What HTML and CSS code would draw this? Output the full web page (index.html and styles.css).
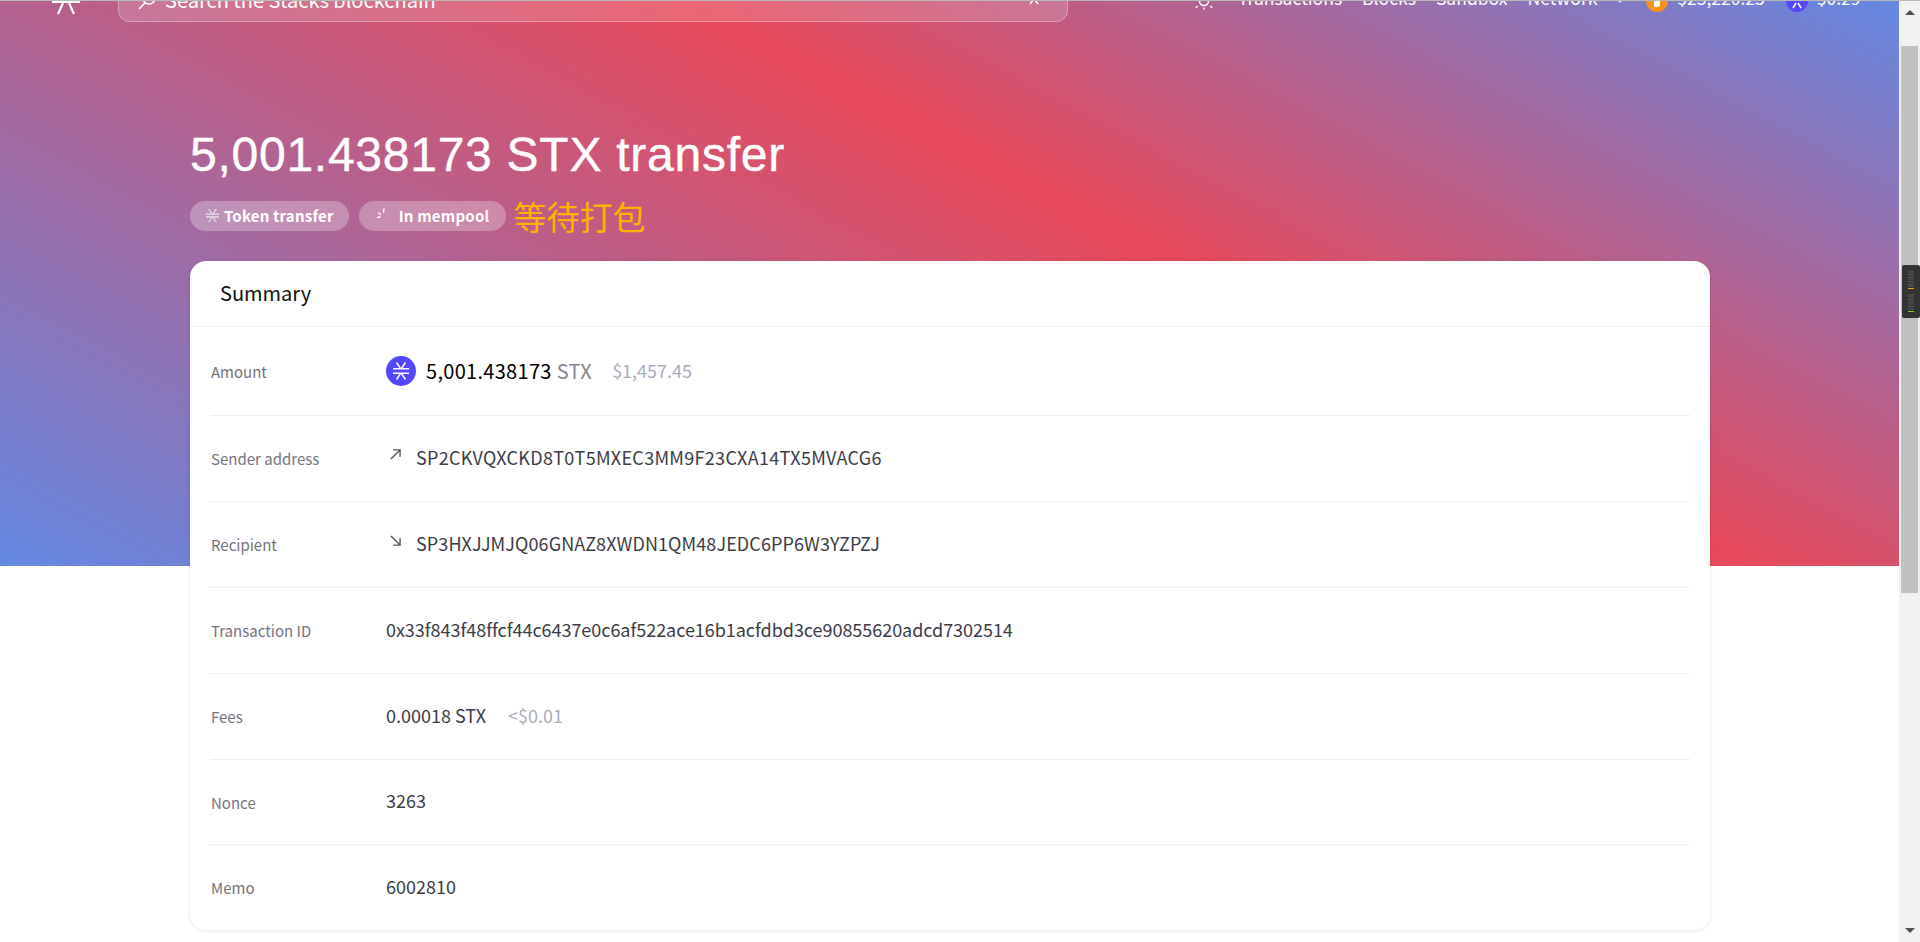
FILE: index.html
```html
<!DOCTYPE html>
<html lang="en">
<head>
  <meta charset="UTF-8" />
  <title>5,001.438173 STX transfer</title>
  <link rel="stylesheet" href="styles.css">
</head>
<body>
  <div class="window">
    <div class="page">

      <!-- Top nav, scrolled partly out of view -->
      <nav class="nav">
        <svg class="logo" viewBox="0 0 28 28" fill="none" stroke="#fff" stroke-width="2.2">
          <path d="M0 8H28M0 14H28M11 15L6 26M17 15L22 26"/>
        </svg>
        <div class="search">
          <svg class="search-icon" viewBox="0 0 18 18" fill="none" stroke="#fff" stroke-width="1.6">
            <circle cx="11" cy="5" r="6"/>
            <path d="M7 10L1 16"/>
          </svg>
          <span class="search-text">Search the Stacks blockchain</span>
          <svg class="search-close" viewBox="0 0 12 12" fill="none" stroke="#fff" stroke-width="1.4">
            <path d="M1 11L5 6L9 11"/>
          </svg>
        </div>
        <svg class="sun" viewBox="0 0 24 24" fill="none" stroke="#fff" stroke-width="1.5">
          <circle cx="12" cy="14" r="4.500"/>
          <path d="M12 20.500V22.500M5.500 19L4 21M18.500 19L20 21"/>
        </svg>
        <a class="nav-link nav-first">Transactions</a>
        <a class="nav-link">Blocks</a>
        <a class="nav-link">Sandbox</a>
        <a class="nav-link">Network</a>
        <span class="nav-caret"></span>
        <div class="price price-btc">
          <span class="coin coin-btc"><span class="coin-mark"></span></span>
          <span class="price-text">$23,220.25</span>
        </div>
        <div class="price">
          <span class="coin coin-stx">
            <svg class="coin-svg" viewBox="0 0 22 22" fill="none" stroke="#fff" stroke-width="1.5">
              <path d="M7 11L11 4L15 11M7 18L10 13M15 18L12 13"/>
            </svg>
          </span>
          <span class="price-text">$0.29</span>
        </div>
      </nav>

      <main class="content">
        <h1 class="title">5,001.438173 STX transfer</h1>

        <div class="tags">
          <span class="tag">
            <svg class="tag-icon" viewBox="0 0 16 16" fill="none" stroke="#fff" stroke-width="1">
              <path d="M1 6.500H15M1 9.500H15M4 1L7.500 6M12 1L8.500 6M4 15L7.500 10M12 15L8.500 10"/>
            </svg>
            Token transfer
          </span>
          <span class="tag tag-pending">
            <svg class="tag-spin" viewBox="0 0 16 16" fill="none" stroke="#fff" stroke-width="1.4" stroke-linecap="round">
              <path d="M9 2L8.500 5M3.500 6L5.500 7.500M2.500 10.500L5 10"/>
            </svg>
            In mempool
          </span>
          <span class="tag-note">等待打包</span>
        </div>

        <section class="card">
          <h2 class="card-title">Summary</h2>

          <div class="row row-amount">
            <div class="row-label">Amount</div>
            <div class="row-value">
              <span class="token">
                <svg class="token-svg" viewBox="0 0 30 30" fill="none" stroke="#fff" stroke-width="1.5">
                  <path d="M7 12.800H23M7 17.200H23M10.500 6.500L14.600 12.600M19.500 6.500L15.400 12.600M10.500 23.500L14.600 17.400M19.500 23.500L15.400 17.400"/>
                </svg>
              </span>
              <span class="amount">5,001.438173</span>
              <span class="unit">STX</span>
              <span class="usd">$1,457.45</span>
            </div>
          </div>

          <div class="row">
            <div class="row-label">Sender address</div>
            <div class="row-value">
              <svg class="arrow" viewBox="0 0 12 12" fill="none" stroke="#55555f" stroke-width="1.5">
                <path d="M1 11L11 1M3.500 1H11V8.500"/>
              </svg>
              <span class="address">SP2CKVQXCKD8T0T5MXEC3MM9F23CXA14TX5MVACG6</span>
            </div>
          </div>

          <div class="row">
            <div class="row-label">Recipient</div>
            <div class="row-value">
              <svg class="arrow" viewBox="0 0 12 12" fill="none" stroke="#55555f" stroke-width="1.5">
                <path d="M1 1L11 11M3.500 11H11V3.500"/>
              </svg>
              <span class="address address-to">SP3HXJJMJQ06GNAZ8XWDN1QM48JEDC6PP6W3YZPZJ</span>
            </div>
          </div>

          <div class="row">
            <div class="row-label">Transaction ID</div>
            <div class="row-value tx-hash">0x33f843f48ffcf44c6437e0c6af522ace16b1acfdbd3ce90855620adcd7302514</div>
          </div>

          <div class="row">
            <div class="row-label">Fees</div>
            <div class="row-value">
              <span>0.00018 STX</span>
              <span class="usd usd-fee">&lt;$0.01</span>
            </div>
          </div>

          <div class="row row-short">
            <div class="row-label">Nonce</div>
            <div class="row-value">3263</div>
          </div>

          <div class="row row-short row-last">
            <div class="row-label">Memo</div>
            <div class="row-value">6002810</div>
          </div>
        </section>
      </main>
    </div>

    <!-- Browser scrollbar -->
    <div class="scrollbar">
      <span class="scroll-up"></span>
      <span class="scroll-thumb"></span>
      <span class="scroll-down"></span>
      <svg class="meter" viewBox="0 0 18 53">
        <rect width="18" height="53" rx="2" fill="#333"/>
        <path d="M6 7H12M6 9.500H12M6 12H12M6 14H12M6 16.500H12M6 19H12M6 21H12" stroke="#5c5c5c"/>
        <path d="M6 23.500H12" stroke="#f39c12"/>
        <path d="M6 30H12M6 32H12M6 34.500H12M6 37H12M6 39H12M6 41.500H12M6 44H12" stroke="#5c5c5c"/>
        <path d="M6 46.500H12" stroke="#7ed321"/>
      </svg>
    </div>
  </div>
</body>
</html>
```

FILE: styles.css
```css
* { margin: 0; padding: 0; box-sizing: border-box; }

html, body {
  height: 100%;
  overflow: hidden;
  background: #fff;
}

body {
  font-family: "Noto Sans CJK SC", "Noto Sans", sans-serif;
  color: #3c3c46;
}

.window {
  display: flex;
  height: 942px;
  border-top: 1px solid #b8b8b8;
  overflow: hidden;
  position: relative;
}

.page {
  flex: 1;
  min-width: 0;
  background: linear-gradient(28deg, #6388e2 0%, #e8495a 59%, #6388e2 100%) no-repeat;
  background-size: 100% 565px;
}

/* nav */
.nav {
  display: flex;
  align-items: center;
  height: 46px;
  margin-top: -25px;
  padding-left: 52px;
  color: #fff;
  font-size: 17.5px;
}

.logo {
  width: 28px;
  height: 28px;
  margin-top: 6px;
  flex: none;
}

.search {
  display: flex;
  align-items: center;
  width: 950px;
  height: 46px;
  margin-left: 38px;
  padding: 0 26px 0 19px;
  background: rgba(255, 255, 255, 0.16);
  border: 1px solid rgba(255, 255, 255, 0.3);
  border-radius: 12px;
  font-size: 20px;
}

.search-icon {
  width: 18px;
  height: 18px;
  margin-top: 6px;
  flex: none;
}

.search-text {
  margin-left: 9px;
  flex: 1;
}

.search-close {
  width: 12px;
  height: 12px;
}

.sun {
  width: 24px;
  height: 24px;
  flex: none;
  margin-left: 124px;
}

.nav-link {
  margin-left: 20px;
  padding-bottom: 3px;
}

.nav-first {
  margin-left: 22px;
}

.nav-caret {
  width: 0;
  height: 0;
  margin: 4px 0 0 20px;
  border-left: 3px solid transparent;
  border-right: 3px solid transparent;
  border-top: 3px solid rgba(255, 255, 255, 0.7);
}

.price {
  display: flex;
  align-items: center;
  gap: 9px;
  margin-left: 21px;
}

.price-btc {
  margin-left: 23px;
}

.price-text {
  padding-bottom: 3px;
}

.coin {
  display: flex;
  align-items: center;
  justify-content: center;
  width: 22px;
  height: 22px;
  margin-top: 3px;
  border-radius: 50%;
}

.coin-btc { background: #f7931a; }
.coin-stx { background: #5546ff; }

.coin-mark {
  width: 6px;
  height: 8px;
  margin-top: 4px;
  background: #fff;
  border-radius: 1px 3px 3px 1px;
}

.coin-svg {
  width: 22px;
  height: 22px;
}

/* hero text */
.content {
  padding: 0 189px 0 190px;
}

.title {
  margin-top: 101px;
  font-family: "Liberation Sans", sans-serif;
  font-size: 48px;
  font-weight: 400;
  line-height: 64px;
  letter-spacing: 0.74px;
  color: #fff;
  -webkit-text-stroke: 0.4px #fff;
}

.tags {
  display: flex;
  align-items: center;
  gap: 10px;
  height: 34px;
  margin-top: 12px;
}

.tag {
  display: flex;
  align-items: center;
  height: 30px;
  padding: 0 15px 2px;
  color: #fff;
  font-size: 15px;
  font-weight: 700;
  letter-spacing: 0.2px;
  background: rgba(255, 255, 255, 0.28);
  border-radius: 15px;
}

.tag-pending {
  padding-right: 17px;
}

.tag-icon {
  width: 15px;
  height: 15px;
  margin-right: 4px;
}

.tag-spin {
  width: 16px;
  height: 16px;
  margin: 0 8px 0 1px;
}

.tag-note {
  margin-left: -3px;
  color: #ffb300;
  font-size: 33px;
  line-height: 34px;
}

/* summary card */
.card {
  margin-top: 28px;
  padding: 0 20px;
  background: #fff;
  border-radius: 16px;
  box-shadow: 0 1px 4px rgba(0, 0, 0, 0.1);
}

.card-title {
  display: flex;
  align-items: center;
  height: 66px;
  margin: 0 -20px;
  padding: 0 0 3px 30px;
  font-size: 20px;
  font-weight: 400;
  color: #111;
  border-bottom: 1px solid #eceef2;
}

.row {
  display: flex;
  align-items: center;
  height: 86px;
  border-bottom: 1px solid #eceef2;
}

.row-amount {
  height: 89px;
}

.row-short {
  height: 85px;
}

.row-last {
  border-bottom: 0;
}

.row-label {
  width: 176px;
  padding-left: 1px;
  flex: none;
  font-size: 15px;
  color: #74747e;
}

.row-value {
  display: flex;
  align-items: center;
  padding-bottom: 4px;
  font-size: 18px;
}

.row-amount .row-value {
  padding-bottom: 0;
}

.tx-hash {
  letter-spacing: -0.04px;
}

.token {
  display: flex;
  width: 30px;
  height: 30px;
  margin-right: 10px;
  background: #5546ff;
  border-radius: 50%;
}

.token-svg {
  width: 30px;
  height: 30px;
}

.amount {
  padding-bottom: 2px;
  color: #000;
  font-size: 20px;
  letter-spacing: 0.3px;
}

.unit {
  margin-left: 5px;
  padding-bottom: 2px;
  color: #85858d;
  font-size: 20px;
  letter-spacing: 0.3px;
}

.usd {
  margin-left: 20px;
  padding-bottom: 2px;
  color: #a9adbb;
}

.usd-fee {
  margin-left: 22px;
  padding-bottom: 0;
}

.address {
  letter-spacing: 0.3px;
}

.address-to {
  letter-spacing: 0.09px;
}

.arrow {
  width: 11px;
  height: 11px;
  margin: -4px 15px 0 4px;
  flex: none;
}

/* scrollbar */
.scrollbar {
  display: flex;
  flex-direction: column;
  align-items: center;
  width: 21px;
  flex: none;
  background: #f1f1f1;
}

.scroll-up,
.scroll-down {
  width: 0;
  height: 0;
  border-left: 5px solid transparent;
  border-right: 5px solid transparent;
}

.scroll-up {
  margin-top: 9px;
  border-bottom: 5px solid #505050;
}

.scroll-thumb {
  width: 17px;
  height: 547px;
  margin-top: 31px;
  background: #c1c1c1;
}

.scroll-down {
  margin-top: 335px;
  border-top: 5px solid #505050;
}

.meter {
  position: absolute;
  top: 264px;
  right: 0;
  width: 18px;
  height: 53px;
}
```
